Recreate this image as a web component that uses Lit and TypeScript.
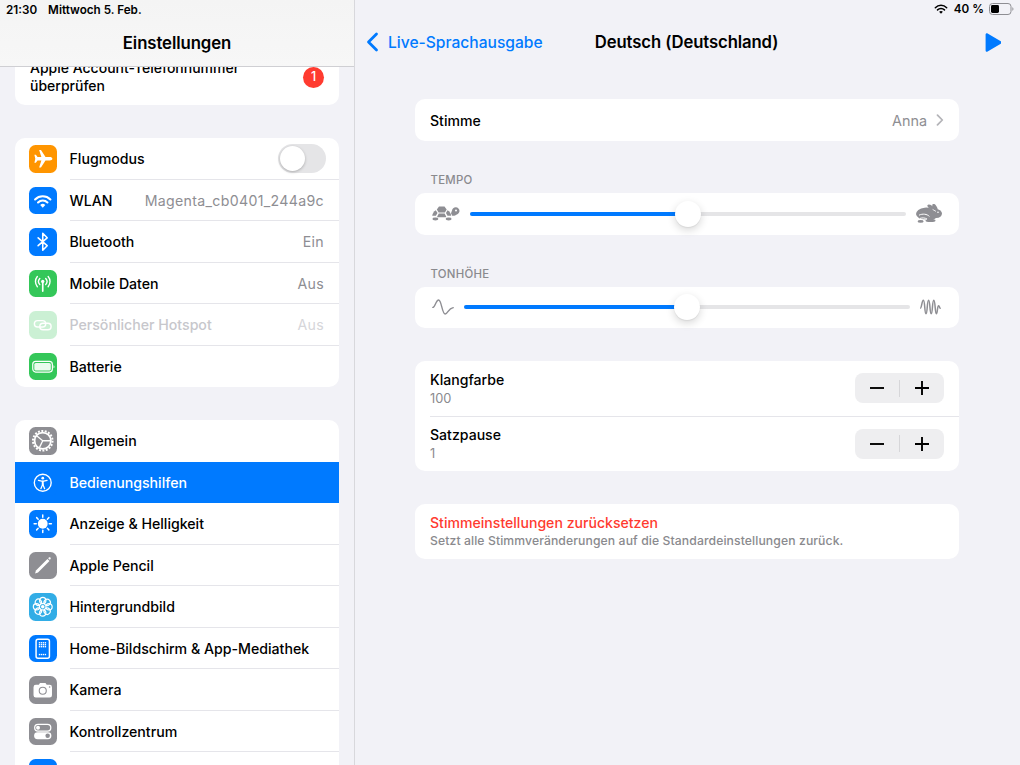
import { LitElement, html, css, svg } from "lit";
import { customElement } from "lit/decorators.js";

const wifi = svg`<path d="M6.2 12.7a11 11 0 0 1 15.6 0M9.2 15.7a6.8 6.8 0 0 1 9.6 0" fill="none" stroke="currentColor" stroke-width="2.1" stroke-linecap="round"/><path d="M14 21l-2.6-2.6a3.7 3.7 0 0 1 5.2 0z" fill="currentColor"/>`;

const rep = (n: number, f: (a: number, i: number) => unknown) =>
  Array.from({ length: n }, (_, i) => f((360 / n) * i, i));

const icons: Record<string, unknown> = {
  plane: svg`<path fill="#fff" d="M23.8 14c0-1-1.3-1.7-2.6-1.7h-4.4L12.2 5h-1.9l2.3 7.3H8.7L7 10H5.5l.9 4-.9 4H7l1.7-2.3h3.9L10.3 23h1.9l4.6-7.3h4.4c1.3 0 2.6-.7 2.6-1.7z"/>`,
  wifi: svg`<g style="color:#fff">${wifi}</g>`,
  bluetooth: svg`<path d="M9.3 10l9.2 8-4.5 4.6V5.4L18.5 10l-9.2 8" fill="none" stroke="#fff" stroke-width="1.6" stroke-linejoin="round" stroke-linecap="round"/>`,
  antenna: svg`<g fill="none" stroke="#fff" stroke-width="1.4" stroke-linecap="round"><path d="M14 12v9.5" stroke-width="1.7"/><path d="M11 8.7a4.6 4.6 0 0 0 0 6.2M17 8.7a4.6 4.6 0 0 1 0 6.2M8.5 6.6a8 8 0 0 0 0 10.4M19.5 6.6a8 8 0 0 1 0 10.4"/></g><circle cx="14" cy="11.6" r="1.7" fill="#fff"/>`,
  link: svg`<g fill="none" stroke="#fff" stroke-width="1.5"><rect x="5.5" y="9.8" width="11.5" height="6.6" rx="3.3"/><rect x="11" y="12.4" width="11.5" height="6.6" rx="3.3"/></g>`,
  battery: svg`<rect x="3.8" y="8.6" width="20" height="10.8" rx="3" fill="none" stroke="#fff" stroke-width="1.2"/><rect x="5.4" y="10.2" width="16.8" height="7.6" rx="1.6" fill="#eafbee"/><path d="M25 12.4c.7.3.9 1 .9 1.6s-.2 1.3-.9 1.6z" fill="#fff"/>`,
  gear: svg`<g fill="none" stroke="#fff"><circle cx="14" cy="14" r="10" stroke-width="2" stroke-dasharray="2 1.49"/><circle cx="14" cy="14" r="8.3" stroke-width="1.8"/><path d="M14 14L7.8 9M14 14H22M14 14l-3.4 7" stroke-width="1.3"/></g>`,
  access: svg`<circle cx="14" cy="14" r="8.6" fill="none" stroke="#fff" stroke-width="1.4"/><circle cx="14" cy="9.3" r="1.4" fill="#fff"/><g fill="none" stroke="#fff" stroke-linecap="round" stroke-linejoin="round"><path d="M9.6 11.6L14 12.6l4.4-1" stroke-width="1.3"/><path d="M14 12.6v3.2" stroke-width="2"/><path d="M14 15.4l-1.9 4.6M14 15.4l1.9 4.6" stroke-width="1.3"/></g>`,
  sun: svg`<circle cx="14" cy="14" r="5" fill="#fff"/>${rep(8, (a) => svg`<path d="M14 5.2v2.2" stroke="#fff" stroke-width="1.5" stroke-linecap="round" transform="rotate(${a} 14 14)"/>`)}`,
  pencil: svg`<path fill="#fff" d="M6.2 21.8l.9-3L18.8 7.1l2.1 2.1L9.2 20.9z"/><path fill="#fff" d="M19.5 6.4l.7-.7c.5-.5 1.2-.5 1.6-.1.5.5.5 1.2 0 1.7l-.7.7z"/>`,
  flower: svg`${rep(8, (a) => svg`<circle cx="14" cy="7.6" r="3.2" fill="none" stroke="#fff" stroke-width="1.2" transform="rotate(${a} 14 14)"/>`)}<circle cx="14" cy="14" r="1.8" fill="#fff"/>`,
  home: svg`<rect x="7.2" y="4.4" width="13.6" height="19.2" rx="2" fill="none" stroke="#fff" stroke-width="1.5"/>${rep(12, (_, i) => svg`<rect x="${10 + (i % 4) * 2}" y="${7.2 + Math.floor(i / 4) * 2}" width="1.4" height="1.4" fill="#fff"/>`)}${rep(4, (_, i) => svg`<rect x="${10 + i * 2}" y="19.2" width="1.4" height="1.4" fill="#fff"/>`)}`,
  camera: svg`<path fill="#fff" d="M7 9h3l1.2-2h5.6L18 9h3a2.4 2.4 0 0 1 2.4 2.4v8.2A2.4 2.4 0 0 1 21 22H7a2.4 2.4 0 0 1-2.4-2.4v-8.2A2.4 2.4 0 0 1 7 9z"/><circle cx="14" cy="15" r="3.6" fill="none" stroke="#8e8e93" stroke-width="1.1"/><circle cx="21" cy="11.2" r=".8" fill="#8e8e93"/>`,
  toggles: svg`<rect x="5.8" y="6.6" width="16.4" height="6.8" rx="3.4" fill="none" stroke="#fff" stroke-width="1.3"/><circle cx="9.2" cy="10" r="2" fill="#fff"/><rect x="5.2" y="14.6" width="17.6" height="7" rx="3.5" fill="#fff"/><circle cx="19" cy="18.1" r="2.3" fill="#8e8e93"/>`,
  blank: svg``,
};

type Row = { label: string; icon: string; bg: string; value?: string; toggle?: boolean; off?: boolean; sel?: boolean; noline?: boolean };

const group1: Row[] = [
  { label: "Flugmodus", icon: "plane", bg: "orange", toggle: true },
  { label: "WLAN", icon: "wifi", bg: "blue", value: "Magenta_cb0401_244a9c" },
  { label: "Bluetooth", icon: "bluetooth", bg: "blue", value: "Ein" },
  { label: "Mobile Daten", icon: "antenna", bg: "green", value: "Aus" },
  { label: "Persönlicher Hotspot", icon: "link", bg: "green", value: "Aus", off: true },
  { label: "Batterie", icon: "battery", bg: "green", noline: true },
];
const group2: Row[] = [
  { label: "Allgemein", icon: "gear", bg: "grey", noline: true },
  { label: "Bedienungshilfen", icon: "access", bg: "blue", sel: true, noline: true },
  { label: "Anzeige & Helligkeit", icon: "sun", bg: "blue" },
  { label: "Apple Pencil", icon: "pencil", bg: "grey" },
  { label: "Hintergrundbild", icon: "flower", bg: "sky" },
  { label: "Home-Bildschirm & App-Mediathek", icon: "home", bg: "blue" },
  { label: "Kamera", icon: "camera", bg: "grey" },
  { label: "Kontrollzentrum", icon: "toggles", bg: "grey" },
  { label: "", icon: "blank", bg: "blue" },
];

const tortoise = html`<svg class="ico-tortoise" viewBox="0 0 28 15" fill="#8e8e93">
  <path d="M7 .4h5.5l2.2 3.2-1.8 3H6.6L4.8 3.6z"/>
  <path d="M3.8 4.3l1.7 2.6-1.6 2.9H.2C.4 7.7 1.7 5.5 3.8 4.3z"/>
  <path d="M15.6 4.3c2.1 1.2 3.4 3.4 3.6 5.5h-3.7l-1.6-2.9z"/>
  <path d="M6.8 7.6h5.8l1.6 2.9-.4.7H5.6l-.4-.7z"/>
  <ellipse cx="3.4" cy="13" rx="3" ry="1.4"/>
  <ellipse cx="16.6" cy="13" rx="3" ry="1.4"/>
  <path d="M19 7.2l1.2 2.6c2 .2 3.4-.4 4.6-1.2 1.6-.8 2.7-2 2.7-3.6C27.5 3 25.9 1.2 23.8 1.2c-2 0-3.6 1.5-3.8 3.4z"/>
  <circle cx="24" cy="4.6" r="1" fill="#fff"/>
</svg>`;

const hare = html`<svg class="ico-hare" viewBox="0 0 26 19" fill="#8e8e93">
  <ellipse cx="9.2" cy="9.4" rx="9.2" ry="5.8" transform="rotate(-6 9.2 9.4)"/>
  <ellipse cx="20.4" cy="9.6" rx="5.6" ry="4.4"/>
  <path d="M12 5h8v9l-3 2h-6z"/>
  <ellipse cx="15.4" cy="3.6" rx="4.6" ry="1.9" transform="rotate(32 15.4 3.6)"/>
  <ellipse cx="19" cy="3.4" rx="3.9" ry="1.9" transform="rotate(58 19 3.4)"/>
  <path d="M16.6 5.4l3.4 2" fill="none" stroke="#fff" stroke-width=".8"/>
  <circle cx="22" cy="8.2" r=".8" fill="#fff"/>
  <ellipse cx="4.6" cy="17.4" rx="3" ry="1.4"/>
  <ellipse cx="14.5" cy="16.6" rx="5" ry="1.5"/>
  <path d="M3 11.2c3.6-1.8 8-1.2 10.4 1.2M4 14.4c2.6-.8 5-.6 7 .6" fill="none" stroke="#fff" stroke-width="1"/>
</svg>`;

const waveLow = html`<svg class="ico-wave" viewBox="0 0 22 16" fill="none" stroke="#8e8e93" stroke-width="1.4" stroke-linecap="round">
  <path d="M.8 8.4C3 8.4 4 1 6.6 1c3 0 3.4 14 6.6 14 2.6 0 3-5.6 8-6.4"/>
</svg>`;

const waveHigh = html`<svg class="ico-wave" viewBox="0 0 22 16" fill="none" stroke="#8e8e93" stroke-width="1.5" stroke-linecap="round">
  <path d="M.7 9C1.6 8.4 2 1.2 3.4 1.2c1.6 0 1.1 13.6 2.6 13.6s1-13.6 2.6-13.6 1.1 13.6 2.6 13.6 1-13.6 2.6-13.6 1.1 13.6 2.6 13.6c1.2 0 .8-8 2.2-8 .9 0 .8 2.4 1.6 2.4"/>
</svg>`;

@customElement("app-root")
export class AppRoot extends LitElement {
  static styles = css`
    :host {
      display: block;
      width: 1020px;
      height: 765px;
      overflow: hidden;
      font-family: Inter, "Liberation Sans", sans-serif;
      color: #000;
      background: #f2f2f7;
    }
    * { box-sizing: border-box; }
    .app { display: flex; height: 765px; }
    .side {
      width: 355px;
      flex: none;
      border-right: 1px solid #d8d8dc;
      display: flex;
      flex-direction: column;
      overflow: hidden;
    }
    .side-head {
      height: 67px;
      flex: none;
      background: linear-gradient(#f4f4f4, #f7f7f7);
      border-bottom: 1px solid #cfcfd3;
      position: relative;
      z-index: 1;
    }
    .clock {
      height: 19px;
      padding-left: 6px;
      display: flex;
      gap: 11px;
      align-items: center;
      font-size: 11.7px;
      font-weight: 600;
    }
    .side-title {
      height: 47px;
      display: flex;
      align-items: center;
      justify-content: center;
      font-size: 16.8px;
      font-weight: 600;
      letter-spacing: -0.1px;
    }
    .list {
      flex: 1;
      overflow: hidden;
      padding: 0 15px;
      display: flex;
      flex-direction: column;
      gap: 33px;
    }
    .group { background: #fff; border-radius: 10px; overflow: hidden; flex: none; }
    .notice {
      margin-top: -19px;
      height: 57px;
      padding: 1px 15px 0 15px;
      display: flex;
      justify-content: space-between;
      align-items: center;
      font-size: 14px;
      font-weight: 500;
      line-height: 18.5px;
    }
    .badge {
      width: 21px;
      height: 21px;
      border-radius: 50%;
      background: #ff3b30;
      color: #fff;
      font-size: 12.5px;
      font-weight: 500;
      display: flex;
      align-items: center;
      justify-content: center;
    }
    .row {
      height: 41.5px;
      display: flex;
      align-items: center;
      padding-left: 14px;
      gap: 13px;
      font-size: 14.15px;
      font-weight: 500;
    }
    .row.sel { background: #007aff; color: #fff; }
    .row.off .ic { opacity: 0.25; }
    .row.off .body { color: #c7c7cc; }
    .row.off .val { color: #d6d6da; }
    .ic { width: 27.5px; height: 27.5px; flex: none; border-radius: 6.5px; display: block; }
    .ic svg { display: block; width: 27.5px; height: 27.5px; }
    .orange { background: #ff9500; }
    .blue { background: #007aff; }
    .green { background: #34c759; }
    .grey { background: #8e8e93; }
    .sky { background: #32ade6; }
    .body {
      flex: 1;
      height: 100%;
      display: flex;
      justify-content: space-between;
      align-items: center;
      padding: 1px 15px 0 0;
      border-bottom: 1px solid #e5e5ea;
    }
    .row.noline .body { border-bottom: 0; padding-top: 0; }
    .val { color: #8e8e93; font-weight: 400; letter-spacing: 0.33px; }
    .toggle {
      width: 48px;
      height: 29px;
      border-radius: 15px;
      background: #e5e5e7;
      padding: 2px;
      margin-right: -2px;
    }
    .knob {
      width: 25px;
      height: 25px;
      border-radius: 50%;
      background: #fff;
      box-shadow: 0 1px 3px rgba(0, 0, 0, 0.25);
    }

    .detail { flex: 1; display: flex; flex-direction: column; min-width: 0; }
    .status {
      height: 18px;
      display: flex;
      justify-content: flex-end;
      align-items: center;
      gap: 5px;
      padding-right: 6px;
      font-size: 11.7px;
      font-weight: 600;
    }
    .status .sw { width: 16px; height: 16px; display: block; }
    .bat { display: block; width: 25px; height: 12px; }
    .nav {
      height: 48px;
      display: grid;
      grid-template-columns: 1fr auto 1fr;
      align-items: center;
      padding: 0 16px 0 14px;
    }
    .back {
      display: flex;
      align-items: center;
      gap: 9px;
      margin-left: -3px;
      color: #007aff;
      font-size: 15.6px;
      font-weight: 500;
    }
    .back svg { width: 13px; height: 20px; display: block; }
    .nav-title { font-size: 16.7px; font-weight: 600; letter-spacing: -0.1px; }
    .play { justify-self: end; width: 16.5px; height: 19px; display: block; margin-right: 3px; }
    .content { padding: 33px 61px 0 60px; display: flex; flex-direction: column; }
    .card { background: #fff; border-radius: 10px; flex: none; }
    .card.voice {
      height: 42px;
      padding: 0 15px;
      display: flex;
      justify-content: space-between;
      align-items: center;
      font-size: 14.1px;
      font-weight: 500;
    }
    .right { display: flex; align-items: center; gap: 9px; color: #8e8e93; font-weight: 400; font-size: 14.4px; }
    .right svg { width: 8px; height: 12px; display: block; }
    .sec {
      height: 52px;
      display: flex;
      align-items: flex-end;
      padding: 0 0 6px 15.5px;
      color: #8a8a8e;
      font-size: 11.4px;
      font-weight: 500;
      letter-spacing: 0.25px;
    }
    .slider {
      height: 41.5px;
      display: flex;
      align-items: center;
      padding: 0 17px;
      gap: 10px;
    }
    .ico-tortoise { width: 28px; height: 15px; flex: none; display: block; }
    .ico-hare { width: 26px; height: 19px; flex: none; display: block; }
    .ico-wave { width: 22px; height: 16px; flex: none; display: block; }
    .track { flex: 1; height: 4px; border-radius: 2px; background: #e5e5e7; position: relative; }
    .fill { height: 4px; border-radius: 2px; background: #007aff; }
    .thumb {
      position: absolute;
      top: -11px;
      width: 26px;
      height: 26px;
      margin-left: -13px;
      border-radius: 50%;
      background: #fff;
      box-shadow: 0 1px 1px rgba(0, 0, 0, 0.06), 0 3px 8px rgba(0, 0, 0, 0.16);
    }
    .gap { height: 33px; flex: none; }
    .spin {
      height: 54.5px;
      display: flex;
      justify-content: space-between;
      align-items: center;
      margin-left: 15px;
      padding-right: 15px;
    }
    .spin .txt { padding-top: 3px; }
    .spin + .spin { border-top: 1px solid #e5e5ea; height: 55.5px; }
    .spin + .spin .txt { padding-top: 1px; }
    .spin-name { font-size: 14.1px; font-weight: 500; line-height: 18px; }
    .spin-val { font-size: 12.8px; color: #8a8a8e; line-height: 18px; margin-top: 1px; }
    .stepper {
      width: 89px;
      height: 30px;
      background: #eeeef0;
      border-radius: 8px;
      display: flex;
      align-items: center;
    }
    .stepper svg { flex: 1; height: 14px; display: block; }
    .stepper i { width: 1px; height: 17px; background: #d6d6d9; flex: none; }
    .reset { height: 55px; padding: 1px 15px 0; display: flex; flex-direction: column; justify-content: center; }
    .reset-t { color: #ff3b30; font-size: 14.1px; font-weight: 500; line-height: 18px; }
    .reset-s { color: #8a8a8e; font-size: 12.2px; font-weight: 500; line-height: 18px; letter-spacing: 0.1px; }
  `;

  private row(r: Row) {
    const classes = ["row", r.sel ? "sel" : "", r.off ? "off" : "", r.noline ? "noline" : ""].join(" ");
    return html`<div class=${classes}>
      <span class="ic ${r.bg}"><svg viewBox="0 0 28 28">${icons[r.icon]}</svg></span>
      <div class="body">
        <span>${r.label}</span>
        ${r.value ? html`<span class="val">${r.value}</span>` : ""}
        ${r.toggle ? html`<div class="toggle"><div class="knob"></div></div>` : ""}
      </div>
    </div>`;
  }

  private slider(left: unknown, right: unknown, pct: number) {
    return html`<div class="card slider">
      ${left}
      <div class="track">
        <div class="fill" style="width:${pct}%"></div>
        <div class="thumb" style="left:${pct}%"></div>
      </div>
      ${right}
    </div>`;
  }

  private spin(name: string, value: string) {
    return html`<div class="spin">
      <div class="txt">
        <div class="spin-name">${name}</div>
        <div class="spin-val">${value}</div>
      </div>
      <div class="stepper">
        <svg viewBox="0 0 14 14"><path d="M0 7h14" stroke="#000" stroke-width="1.9"/></svg>
        <i></i>
        <svg viewBox="0 0 14 14"><path d="M0 7h14M7 0v14" stroke="#000" stroke-width="1.9"/></svg>
      </div>
    </div>`;
  }

  render() {
    return html`<div class="app">
      <aside class="side">
        <header class="side-head">
          <div class="clock"><span>21:30</span><span>Mittwoch 5. Feb.</span></div>
          <div class="side-title">Einstellungen</div>
        </header>
        <div class="list">
          <div class="group notice">
            <span>Apple Account-Telefonnummer<br />überprüfen</span>
            <span class="badge">1</span>
          </div>
          <div class="group">${group1.map((r) => this.row(r))}</div>
          <div class="group">${group2.map((r) => this.row(r))}</div>
        </div>
      </aside>
      <main class="detail">
        <div class="status">
          <svg class="sw" viewBox="3 6 22 17">${wifi}</svg>
          <span>40 %</span>
          <svg class="bat" viewBox="0 0 25 12">
            <rect x=".5" y=".5" width="21.5" height="11" rx="3" fill="none" stroke="#8e8e93"/>
            <rect x="2" y="2" width="8" height="8" rx="1.4" fill="#000"/>
            <path d="M23.4 4.2c.8.3 1 1.1 1 1.8s-.2 1.5-1 1.8z" fill="#8e8e93"/>
          </svg>
        </div>
        <nav class="nav">
          <div class="back">
            <svg viewBox="0 0 13 20"><path d="M10.5 2L2.5 10l8 8" fill="none" stroke="#007aff" stroke-width="2.8" stroke-linecap="round" stroke-linejoin="round"/></svg>
            <span>Live-Sprachausgabe</span>
          </div>
          <div class="nav-title">Deutsch (Deutschland)</div>
          <svg class="play" viewBox="0 0 16.5 19"><path d="M.6 1.6C.6.5 1.6-.1 2.6.4L15.8 8.300c.9.5.9 1.900 0 2.400L2.600 18.600c-1 .5-2-.1-2-1.200z" fill="#007aff"/></svg>
        </nav>
        <div class="content">
          <div class="card voice">
            <span>Stimme</span>
            <span class="right">Anna
              <svg viewBox="0 0 7 11"><path d="M1.2 1l4.4 4.5-4.4 4.5" fill="none" stroke="#b4b4b8" stroke-width="1.6" stroke-linecap="round" stroke-linejoin="round"/></svg>
            </span>
          </div>
          <div class="sec">TEMPO</div>
          ${this.slider(tortoise, hare, 50)}
          <div class="sec">TONHÖHE</div>
          ${this.slider(waveLow, waveHigh, 50)}
          <div class="gap"></div>
          <div class="card">
            ${this.spin("Klangfarbe", "100")}
            ${this.spin("Satzpause", "1")}
          </div>
          <div class="gap"></div>
          <div class="card reset">
            <div class="reset-t">Stimmeinstellungen zurücksetzen</div>
            <div class="reset-s">Setzt alle Stimmveränderungen auf die Standardeinstellungen zurück.</div>
          </div>
        </div>
      </main>
    </div>`;
  }
}
